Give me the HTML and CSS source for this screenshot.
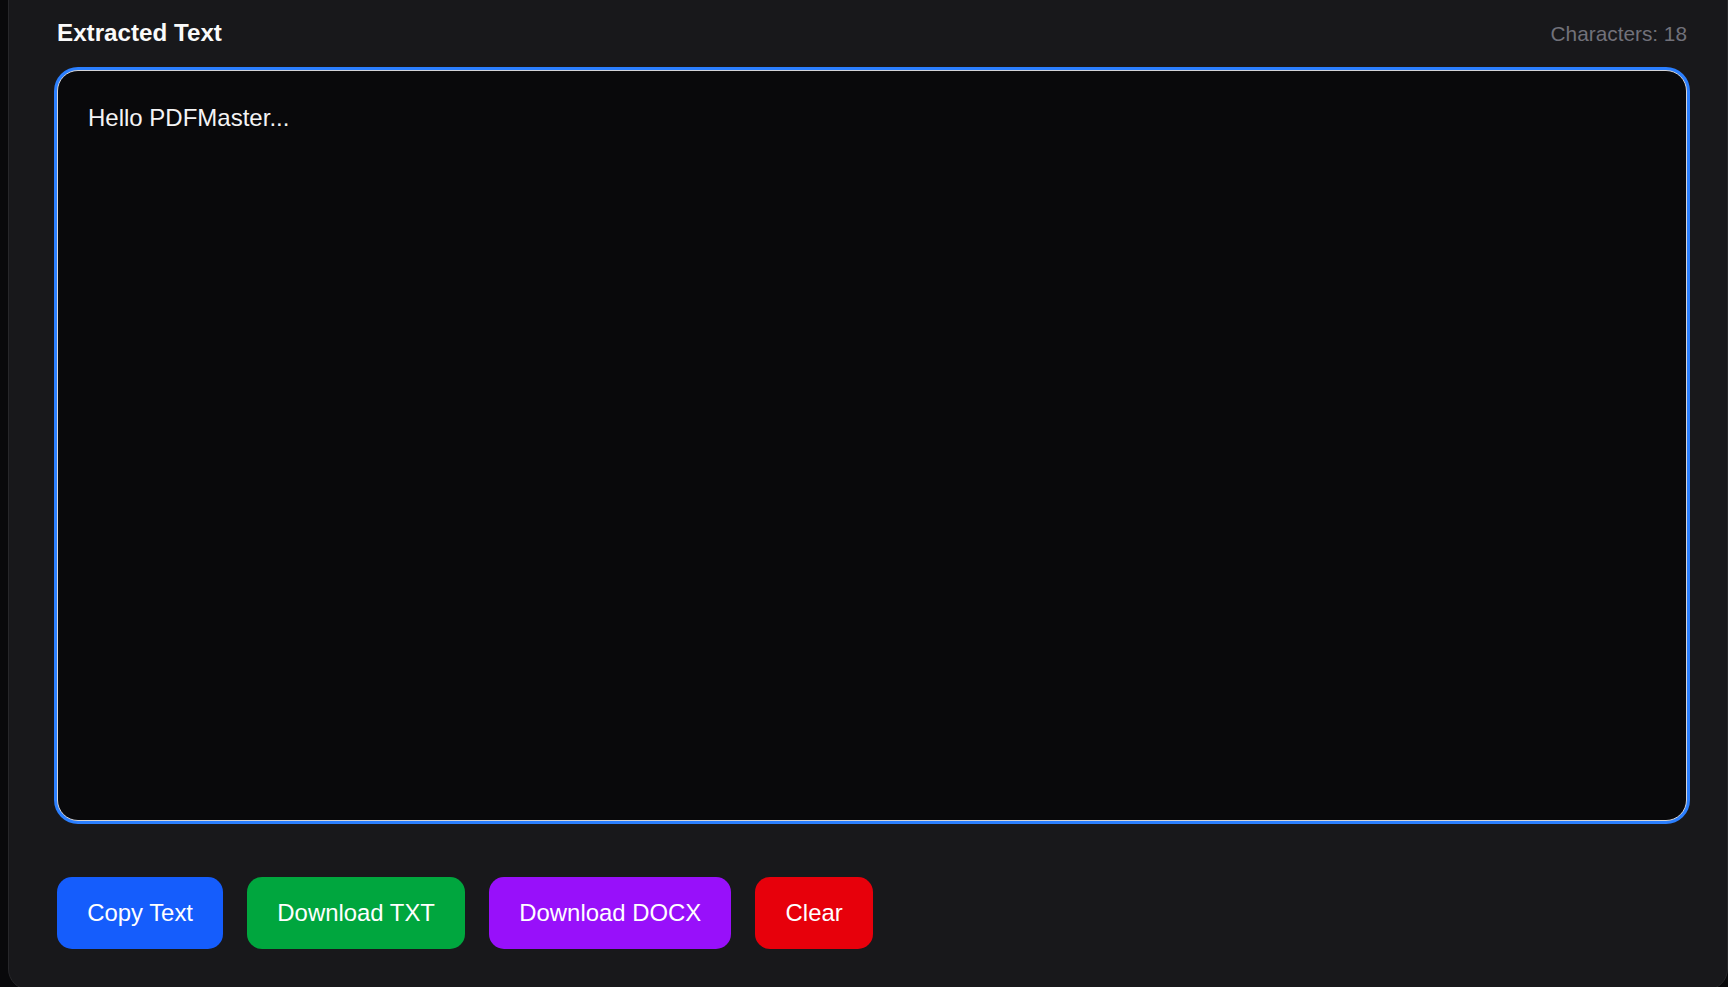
FILE: index.html
```html
<!DOCTYPE html>
<html lang="en">
<head>
    <meta charset="UTF-8">
    <meta name="viewport" content="width=device-width, initial-scale=1.0">
    <title>PDFMaster - Extracted Text</title>
    <link rel="stylesheet" href="styles.css">
</head>
<body>
    <section class="result-card">
        <div class="result-header">
            <h2 class="result-title">Extracted Text</h2>
            <span class="char-count" id="charCount">Characters: 18</span>
        </div>

        <textarea id="output" class="output-box" spellcheck="false">Hello PDFMaster...</textarea>

        <div class="actions">
            <button type="button" class="btn btn-blue">Copy Text</button>
            <button type="button" class="btn btn-green">Download TXT</button>
            <button type="button" class="btn btn-purple">Download DOCX</button>
            <button type="button" class="btn btn-red">Clear</button>
        </div>
    </section>

    <script>
        var output = document.getElementById("output");
        output.addEventListener("input", function () {
            document.getElementById("charCount").textContent = "Characters: " + output.value.length;
        });
    </script>
</body>
</html>
```

FILE: styles.css
```css
html, body {
    margin: 0;
    height: 100%;
    overflow: hidden;
}
body {
    font-family: "Liberation Sans", Arial, sans-serif;
    background-color: #09090b;
    color: #fafafa;
}
.result-card {
    box-sizing: border-box;
    margin: -40px 0 0 8px;
    padding: 54.4px 40px 40px 48px;
    background-color: #18181b;
    border: 1px solid #27272a;
    border-radius: 21px;
}
.result-header {
    display: flex;
    justify-content: space-between;
    align-items: center;
    margin-bottom: 18.2px;
}
.result-title {
    margin: 0;
    font-size: 24.2px;
    line-height: 36.4px;
    font-weight: bold;
    color: #fafafa;
}
.char-count {
    font-size: 20.8px;
    line-height: 31.2px;
    color: #71717a;
}
.output-box {
    display: block;
    box-sizing: border-box;
    width: 100%;
    height: 751px;
    margin: 0;
    padding: 29px 30px 30px;
    background-color: #09090b;
    color: #f4f4f5;
    font-family: inherit;
    font-size: 24px;
    line-height: 35px;
    border: 1px solid #d4d4d8;
    border-radius: 21px;
    box-shadow: 0 0 0 3px #2b7fff;
    outline: none;
    resize: none;
}
.actions {
    display: flex;
    gap: 24px;
    margin-top: 56.5px;
}
.btn {
    padding: 17.5px 30.2px;
    border: none;
    border-radius: 15px;
    font-family: inherit;
    font-size: 23.9px;
    line-height: 36.4px;
    color: #fff;
    cursor: pointer;
}
.btn-blue {
    background-color: #155dfc;
}
.btn-green {
    background-color: #00a63e;
}
.btn-purple {
    background-color: #9810fa;
}
.btn-red {
    background-color: #e7000b;
}
.btn:hover {
    filter: brightness(1.1);
}
```
